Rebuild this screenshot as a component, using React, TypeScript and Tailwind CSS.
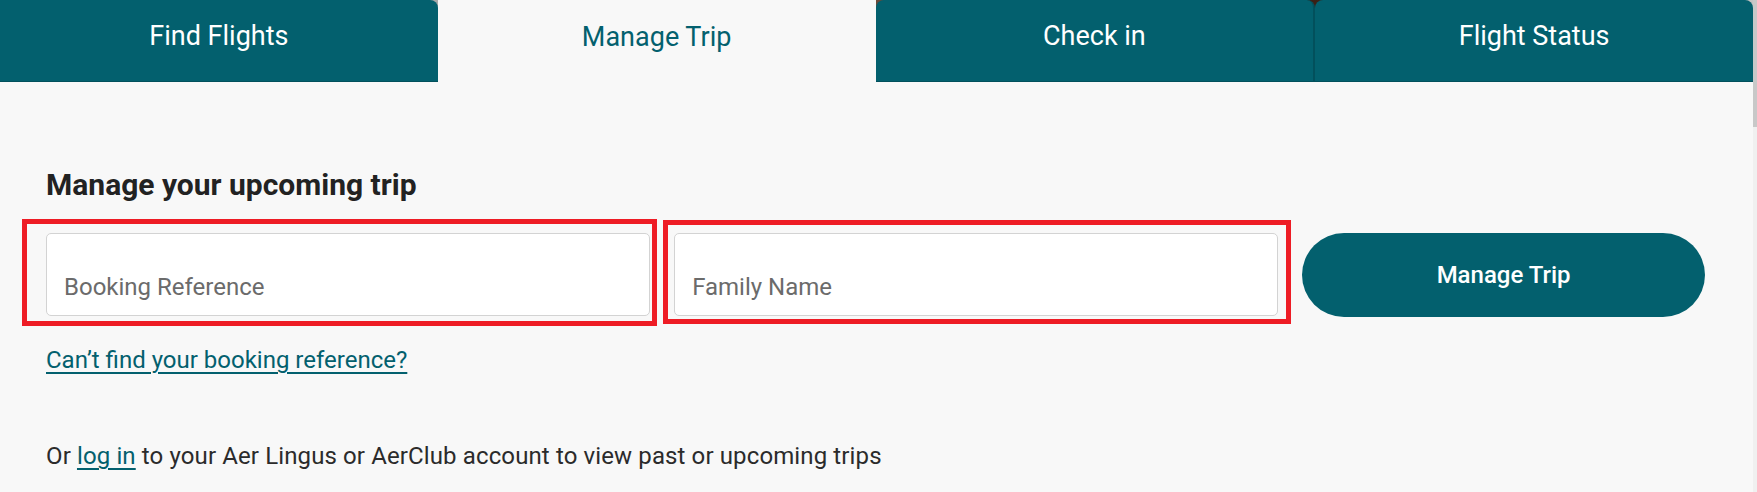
const tabs = [
  { label: "Find Flights", active: false, shape: "rounded-tr-[8px]" },
  { label: "Manage Trip", active: true, shape: "" },
  { label: "Check in", active: false, shape: "rounded-tl-[8px] rounded-tr-[8px] border-r-2 border-r-[#02505c]" },
  { label: "Flight Status", active: false, shape: "rounded-tl-[8px] rounded-tr-[8px]" },
];

function TextBox({ placeholder }: { placeholder: string }) {
  return (
    <div className="h-[83px] bg-white border border-[#d3d3d3] rounded-[5px] flex items-end px-[17px] pb-[14px]">
      <span className="text-[24px] leading-[28px] text-[#6b6b6b]">{placeholder}</span>
    </div>
  );
}

export default function App() {
  return (
    <div className="relative flex h-[492px] overflow-hidden bg-[#f8f8f8] font-['Roboto',sans-serif]">
      <div className="flex-1">
        {/* tab strip, sits over the hero image */}
        <div className="flex h-[82px] bg-[linear-gradient(90deg,#a9a9a9_0%,#a9a9a9_30%,#6b4a3a_50%,#3a1f15_75%,#c4c4c4_100%)]">
          {tabs.map((t) => (
            <div
              key={t.label}
              className={
                t.active
                  ? "flex-1 flex items-center justify-center pb-[8px] bg-[#f8f8f8] text-[#03606e] text-[27px]"
                  : `flex-1 flex items-center justify-center pb-[8px] bg-[#03606e] border-b border-b-[#02505c] text-white text-[27px] ${t.shape}`
              }
            >
              {t.label}
            </div>
          ))}
        </div>

        <div className="pl-[46px] pr-[48px]">
          <h2 className="mt-[85px] text-[30px] leading-[36px] font-bold text-[#222222]">Manage your upcoming trip</h2>

          <div className="mt-[30px] grid grid-cols-[3fr_3fr_2fr] gap-[24px]">
            <TextBox placeholder="Booking Reference" />
            <TextBox placeholder="Family Name" />
            <button className="h-[84px] rounded-full bg-[#03606e] text-white text-[24px] font-medium">Manage Trip</button>
          </div>

          <a href="#" className="mt-[29px] inline-block text-[24px] leading-[28px] text-[#03606e] underline decoration-2 underline-offset-[4px]">
            Can’t find your booking reference?
          </a>

          <p className="mt-[67px] text-[24px] leading-[28px] tracking-[0.005em] text-[#2b2b2b]">
            Or{" "}
            <a href="#" className="text-[#03606e] underline decoration-2 underline-offset-[4px]">
              log in
            </a>{" "}
            to your Aer Lingus or AerClub account to view past or upcoming trips
          </p>
        </div>
      </div>

      {/* page scrollbar */}
      <div className="w-[4px] flex flex-col bg-[#f0f0f0]">
        <div className="h-[127px] bg-[#c8c8c8]" />
      </div>

      {/* red highlight boxes drawn over the two fields */}
      <div className="absolute left-[22px] top-[219px] w-[635px] h-[107px] border-[5px] border-[#ee1c25]" />
      <div className="absolute left-[663px] top-[220px] w-[628px] h-[104px] border-[5px] border-[#ee1c25]" />
    </div>
  );
}
